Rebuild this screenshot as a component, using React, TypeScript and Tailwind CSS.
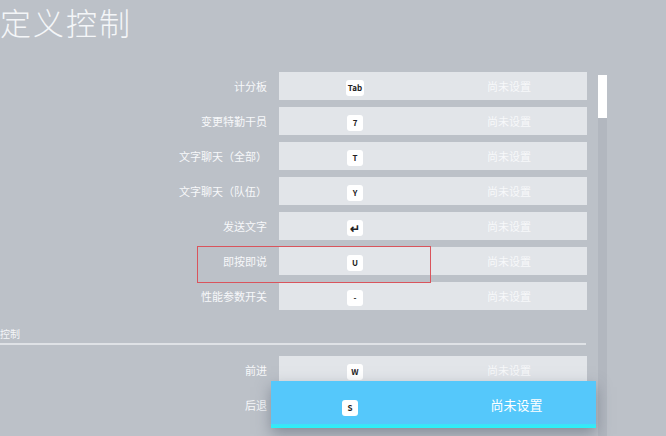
import React from 'react';

const rows = [
    { label: '计分板', key: 'Tab' },
    { label: '变更特勤干员', key: '7' },
    { label: '文字聊天（全部）', key: 'T' },
    { label: '文字聊天（队伍）', key: 'Y' },
    { label: '发送文字', key: '↵' },
    { label: '即按即说', key: 'U' },
    { label: '性能参数开关', key: '-' },
];

const moveRows = [
    { label: '前进', key: 'W' },
    { label: '后退', key: 'S', covered: true },
];

const KeyBadge: React.FC<{ k: string }> = ({ k }) => (
    <span
        className={`min-w-[16px] h-[16px] px-[2px] bg-white rounded-[3px] flex items-center justify-center font-bold text-[#222] leading-none ${
            k === '↵' ? 'text-[12px]' : 'text-[8px]'
        }`}
    >
        {k}
    </span>
);

const BindRow: React.FC<{ label: string; k: string; covered?: boolean }> = ({ label, k, covered }) => (
    <div className="flex h-[28px]">
        <div className="w-[279px] pr-[12px] flex items-center justify-end text-[11px] text-[#f7f8fa]">
            {label}
        </div>
        <div className="w-[308px] flex bg-[#e2e5e9]">
            {/* the selected row draws its own cell on top */}
            {!covered && (
                <>
                    <div className="w-[152px] flex items-center justify-center pt-[4px]">
                        <KeyBadge k={k} />
                    </div>
                    <div className="flex-1 flex items-center justify-center text-[11px] text-[#f7f8fa]">
                        尚未设置
                    </div>
                </>
            )}
        </div>
    </div>
);

const App: React.FC = () => {
    return (
        <div
            className="relative w-[666px] h-[436px] overflow-hidden bg-[#bcc1c8] select-none"
            style={{ fontFamily: '"Noto Sans CJK SC", "Noto Sans", sans-serif' }}
        >
            {/* Title */}
            <h1 className="h-[72px] pt-[2px] text-[31px] tracking-[2px] leading-[40px] font-light text-[#f4f6f8]">
                定义控制
            </h1>

            <div className="flex">
                {/* List */}
                <div className="w-[598px] flex flex-col">
                    <div className="flex flex-col gap-[7px]">
                        {rows.map(r => (
                            <BindRow key={r.label} label={r.label} k={r.key} />
                        ))}
                    </div>

                    {/* Section */}
                    <div className="mt-[13px] w-[586px] h-[22px] flex items-center text-[10px] text-[#f4f6f8] border-b-2 border-[#dfe2e6]">
                        控制
                    </div>

                    <div className="mt-[11px] flex flex-col gap-[7px]">
                        {moveRows.map(r => (
                            <BindRow key={r.label} label={r.label} k={r.key} covered={r.covered} />
                        ))}
                    </div>
                </div>

                {/* Scrollbar */}
                <div className="mt-[3px] w-[9px] h-[400px] bg-[#b2b7bf]">
                    <div className="h-[43px] bg-white" />
                </div>
            </div>

            {/* Focus outline */}
            <div className="absolute left-[197px] top-[246px] w-[234px] h-[37px] border border-[#d9545c]" />

            {/* Selected row */}
            <div className="absolute left-[271px] top-[381px] w-[325px] h-[47px] flex flex-col bg-[#55c8fb] shadow-[0_6px_14px_rgba(80,90,105,0.5)]">
                <div className="flex-1 flex">
                    <div className="w-[158px] flex items-center justify-center pt-[10px]">
                        <KeyBadge k="S" />
                    </div>
                    <div className="flex-1 flex items-center justify-center pt-[4px] pl-[8px] text-[13px] text-white">
                        尚未设置
                    </div>
                </div>
                <div className="h-[4px] bg-gradient-to-b from-[#3fe0f8] to-[#24f4f6]" />
            </div>
        </div>
    );
};

export default App;
